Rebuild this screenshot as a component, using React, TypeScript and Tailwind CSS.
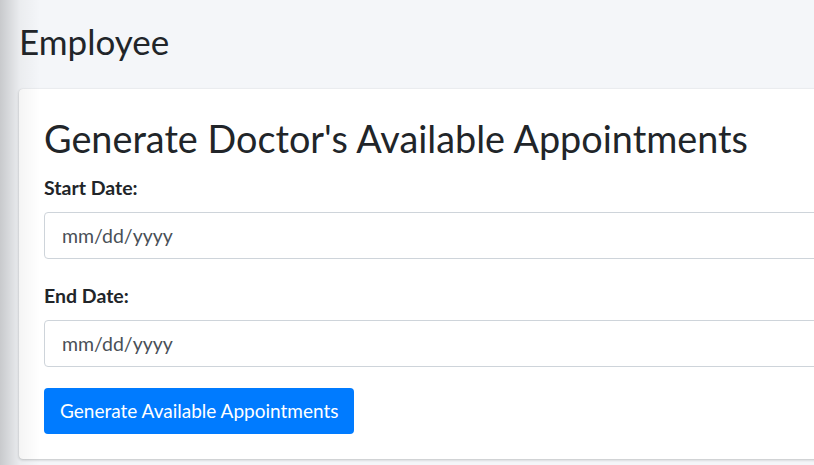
import React, { useState } from 'react';

const FONT = "font-['Lato','Liberation_Sans',sans-serif]";

const DateField: React.FC<{ id: string; label: string; value: string; onChange: (v: string) => void }> = ({
  id,
  label,
  value,
  onChange,
}) => (
  <div className="mb-[25px]">
    <label htmlFor={id} className="block text-[19.5px] font-bold leading-6 text-[#212529] mb-[12px]">
      {label}
    </label>
    <input
      id={id}
      type="text"
      value={value}
      onChange={(e) => onChange(e.target.value)}
      placeholder="mm/dd/yyyy"
      className="block w-full h-[47px] px-[17px] text-[19.5px] text-[#495057] placeholder:text-[#495057] bg-white border border-[#ced4da] rounded-[4px] outline-none"
    />
  </div>
);

const App: React.FC = () => {
  const [start, setStart] = useState('');
  const [end, setEnd] = useState('');

  return (
    <div className={`relative w-screen h-screen overflow-hidden bg-[#f4f6f9] ${FONT}`}>
      <div className="w-[900px] pl-[19px] pt-[21px]">
        <h2 className="text-[35px] leading-[40px] text-[#212529] mb-[28px]">Employee</h2>

        {/* Appointment generator card */}
        <div className="bg-white rounded-[4px] shadow-[0_0_1px_rgba(0,0,0,0.125),0_1px_3px_rgba(0,0,0,0.2)] px-[25px] pt-[26px] pb-[25px]">
          <h1 className="text-[37.8px] leading-[48px] text-[#212529] mb-[13px]">Generate Doctor's Available Appointments</h1>

          <DateField id="startDate" label="Start Date:" value={start} onChange={setStart} />
          <DateField id="endDate" label="End Date:" value={end} onChange={setEnd} />

          <button
            type="button"
            className="-mt-[4px] h-[46px] px-[16px] bg-[#007bff] text-white text-[19px] rounded-[4px]"
          >
            Generate Available Appointments
          </button>
        </div>
      </div>

      {/* sidebar shadow falling over the content */}
      <div className="pointer-events-none absolute inset-y-0 left-0 w-[40px] bg-gradient-to-r from-[rgba(0,0,0,0.18)] via-[rgba(0,0,0,0.04)] to-transparent" />
    </div>
  );
};

export default App;
